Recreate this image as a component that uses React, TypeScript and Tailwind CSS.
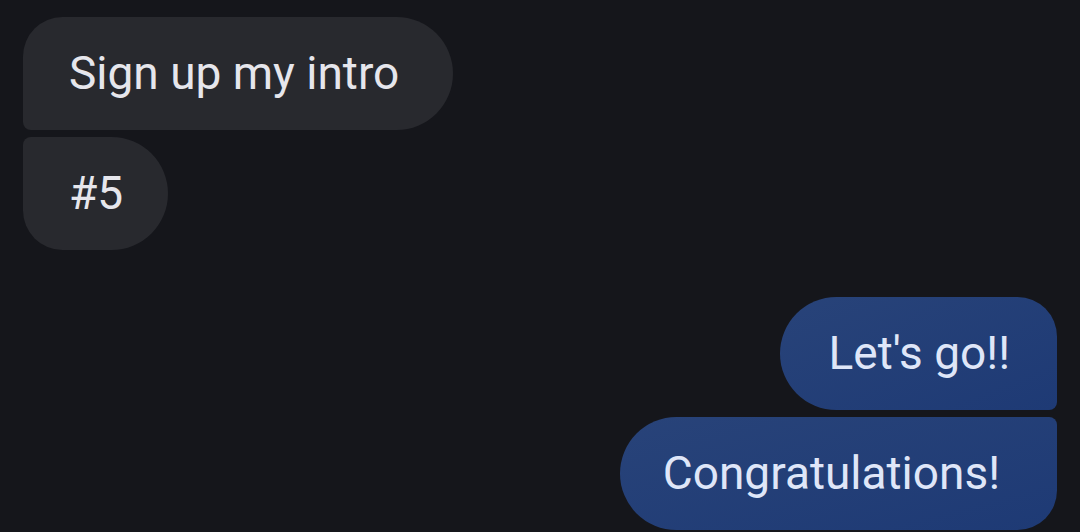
import React from "react";

export default function App() {
  return (
    <div
      className="w-[1080px] h-[532px] overflow-hidden bg-[#15161b] flex flex-col pt-[17px] px-[23px]"
      style={{ fontFamily: "Roboto, 'Open Sans', sans-serif" }}
    >
      <div className="flex flex-col items-start gap-[7px]">
        <div className="h-[113px] flex items-center pl-[46px] pr-[54px] bg-[#28292e] text-[#e6e6ec] text-[46px] rounded-tl-[40px] rounded-bl-[8px] rounded-r-[57px]">
          Sign up my intro
        </div>
        <div className="h-[113px] flex items-center pl-[46px] pr-[45px] bg-[#28292e] text-[#e6e6ec] text-[46px] rounded-tl-[8px] rounded-bl-[40px] rounded-r-[57px]">
          #5
        </div>
      </div>
      <div className="flex flex-col items-end gap-[7px] mt-[47px]">
        <div className="h-[113px] flex items-center pl-[49px] pr-[47px] bg-gradient-to-br from-[#284379] to-[#1e3a75] text-[#dfe6f8] text-[46px] rounded-l-[57px] rounded-tr-[40px] rounded-br-[8px]">
          Let's go!!
        </div>
        <div className="h-[113px] flex items-center pl-[43px] pr-[57px] bg-gradient-to-br from-[#284379] to-[#1e3a75] text-[#dfe6f8] text-[46px] rounded-l-[57px] rounded-tr-[8px] rounded-br-[40px]">
          Congratulations!
        </div>
      </div>
    </div>
  );
}
